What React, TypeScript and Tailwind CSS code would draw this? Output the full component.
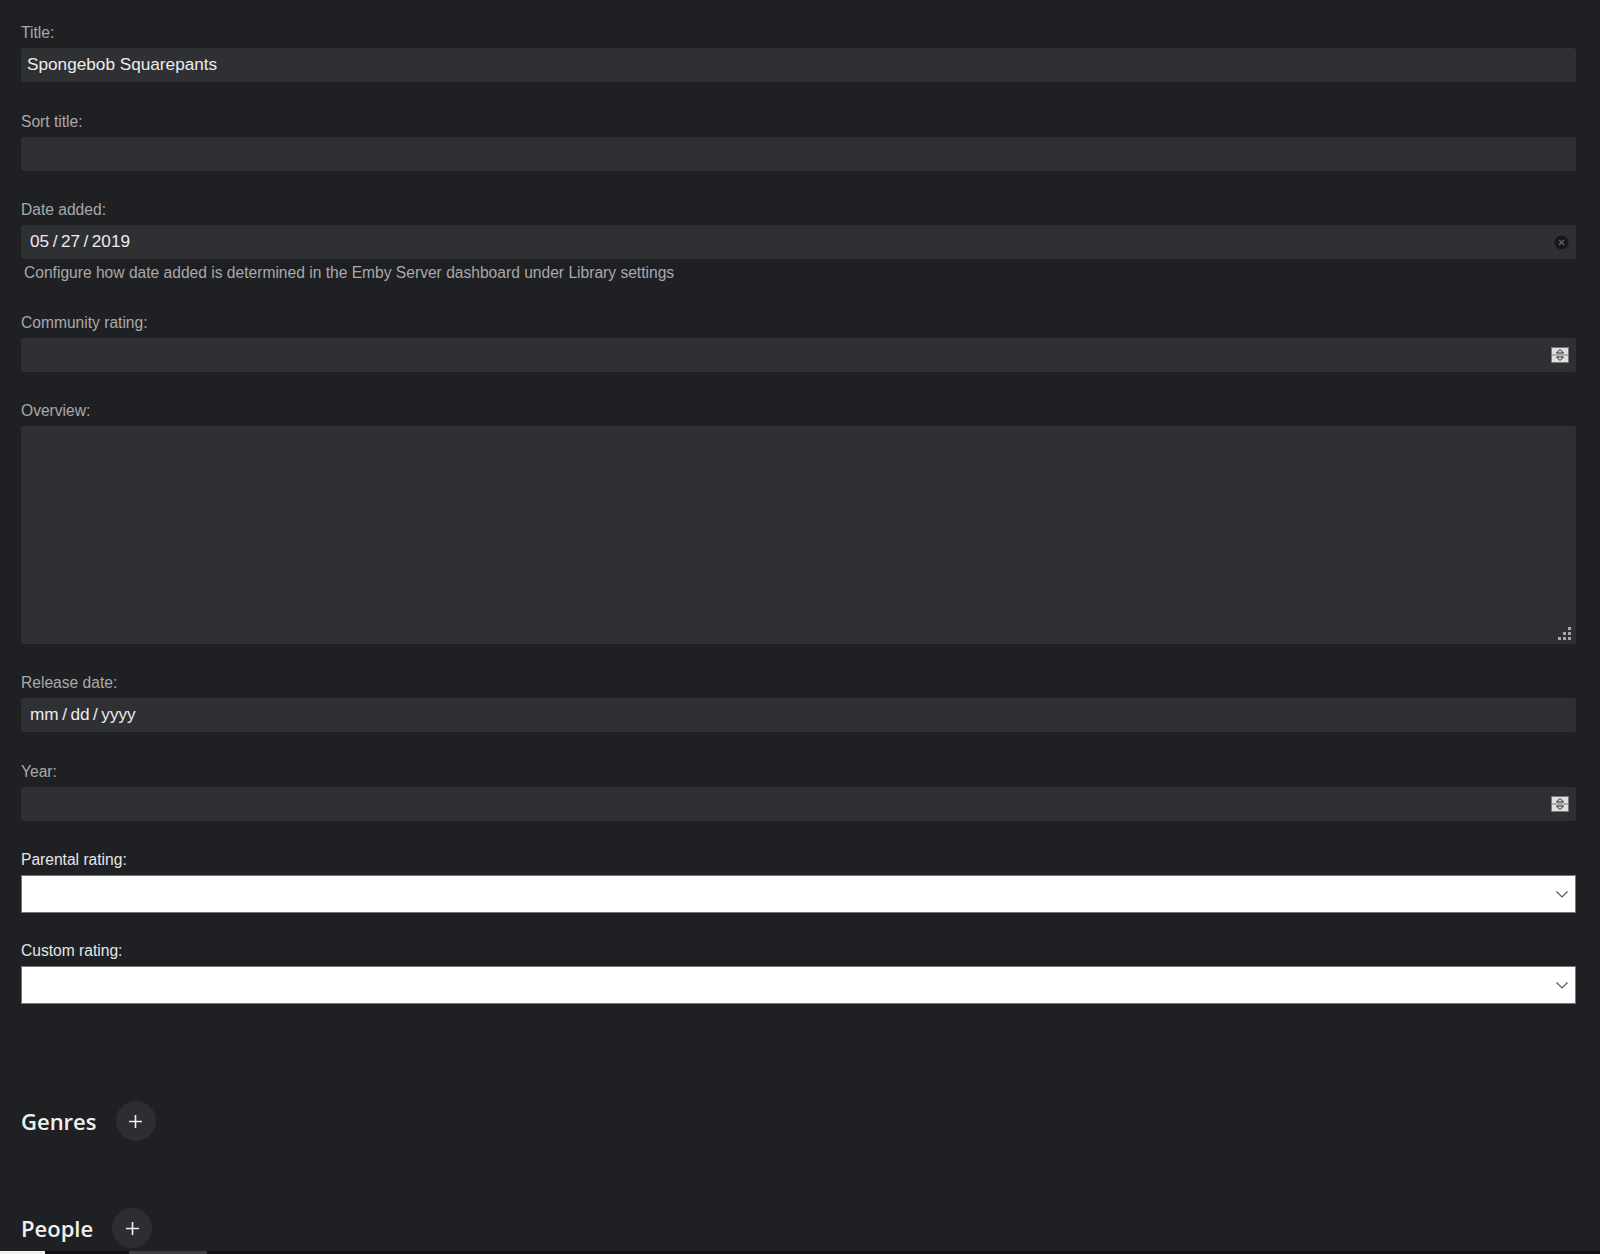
const labelCls = "block h-[18px] text-[15.6px] leading-[18px] text-[#a9a9ab]"

function Label({ children }: { children: string }) {
  return <label className={labelCls}>{children}</label>
}

function TextBox({ value, pad, children }: { value?: React.ReactNode; pad?: string; children?: React.ReactNode }) {
  return (
    <div className={"mt-[6px] flex h-[34px] items-center rounded-[3px] bg-[#2f3034] pr-[6px] text-[17.2px] text-[#ececec] " + (pad ?? "pl-[6px]")}>
      <span className="flex flex-1">{value}</span>
      {children}
    </div>
  )
}

function DateParts({ parts }: { parts: string[] }) {
  return (
    <>
      {parts.map((p, i) => (
        <span key={i} className="flex">
          {i > 0 && <span className="mx-[3.5px]">/</span>}
          <span>{p}</span>
        </span>
      ))}
    </>
  )
}

function Spinner() {
  return (
    <svg width="18" height="16" viewBox="0 0 18 16" className="mr-[1px]">
      <rect x="0.5" y="0.5" width="17" height="15" fill="#e0e0e0" stroke="#7a7a7a" />
      <line x1="1" y1="8" x2="17" y2="8" stroke="#7a7a7a" />
      <path d="M9 2.5 L12.5 6 H5.5 Z" fill="none" stroke="#222" strokeWidth="1" />
      <path d="M9 13.5 L12.5 10 H5.5 Z" fill="none" stroke="#222" strokeWidth="1" />
    </svg>
  )
}

function ClearIcon() {
  return (
    <svg width="15" height="15" viewBox="0 0 15 15" className="mr-[1px]">
      <circle cx="7.5" cy="7.5" r="7" fill="#16171a" />
      <path d="M5 5 L10 10 M10 5 L5 10" stroke="#5c5d61" strokeWidth="1.7" />
    </svg>
  )
}

function Select() {
  return (
    <div className="mt-[6px] flex h-[38px] items-center justify-end border border-[#767676] bg-white pr-[7px]">
      <svg width="12" height="7" viewBox="0 0 12 7">
        <path d="M0.5 0.5 L6 6 L11.5 0.5" fill="none" stroke="#555" strokeWidth="1.1" />
      </svg>
    </div>
  )
}

function Section({ title, className }: { title: string; className: string }) {
  return (
    <div className={"flex items-center " + className}>
      <h2 className="font-['Open_Sans',sans-serif] text-[22px] font-semibold leading-[30px] text-[#f0f0f0]">{title}</h2>
      <button className="ml-[19px] flex h-[40px] w-[40px] items-center justify-center rounded-full bg-[#2d2e32]">
        <svg width="15" height="15" viewBox="0 0 15 15">
          <path d="M7.5 1 V14 M1 7.5 H14" stroke="#f2f2f2" strokeWidth="1.6" />
        </svg>
      </button>
    </div>
  )
}

export default function App() {
  return (
    <div className="flex h-[1254px] flex-col overflow-hidden bg-[#1f2023] font-['Liberation_Sans',Arial,sans-serif]">
      <div className="flex-1 pl-[21px] pr-[24px] pt-[24px]">
        <div className="mb-[31px]">
          <Label>Title:</Label>
          <TextBox value="Spongebob Squarepants" />
        </div>

        <div className="mb-[30px]">
          <Label>Sort title:</Label>
          <TextBox />
        </div>

        <div className="mb-[32px]">
          <Label>Date added:</Label>
          <TextBox value={<DateParts parts={["05", "27", "2019"]} />} pad="pl-[9px]">
            <ClearIcon />
          </TextBox>
          <p className="mt-[5px] pl-[3px] text-[15.6px] leading-[18px] text-[#a9a9ab]">
            Configure how date added is determined in the Emby Server dashboard under Library settings
          </p>
        </div>

        <div className="mb-[30px]">
          <Label>Community rating:</Label>
          <TextBox>
            <Spinner />
          </TextBox>
        </div>

        <div className="mb-[30px]">
          <Label>Overview:</Label>
          <div className="relative mt-[6px] h-[218px] rounded-[3px] bg-[#2f3034]">
            <svg width="13" height="13" viewBox="0 0 13 13" className="absolute bottom-[4px] right-[5px]">
              <g fill="#a8a8a8">
                <rect x="10" y="0" width="3" height="3" />
                <rect x="5" y="5" width="3" height="3" />
                <rect x="10" y="5" width="3" height="3" />
                <rect x="0" y="10" width="3" height="3" />
                <rect x="5" y="10" width="3" height="3" />
                <rect x="10" y="10" width="3" height="3" />
              </g>
            </svg>
          </div>
        </div>

        <div className="mb-[31px]">
          <Label>Release date:</Label>
          <TextBox value={<DateParts parts={["mm", "dd", "yyyy"]} />} pad="pl-[9px]" />
        </div>

        <div className="mb-[30px]">
          <Label>Year:</Label>
          <TextBox>
            <Spinner />
          </TextBox>
        </div>

        <div className="mb-[29px]">
          <label className="block h-[18px] text-[15.6px] leading-[18px] text-[#e6e6e6]">Parental rating:</label>
          <Select />
        </div>

        <div>
          <label className="block h-[18px] text-[15.6px] leading-[18px] text-[#e6e6e6]">Custom rating:</label>
          <Select />
        </div>

        <Section title="Genres" className="mt-[97px]" />
        <Section title="People" className="mt-[67px]" />
      </div>
      <div className="flex h-[3px] bg-[#111214]">
        <div className="w-[45px] bg-[#f2f2f2]" />
        <div className="ml-[84px] w-[78px] bg-[#3c3d41]" />
      </div>
    </div>
  )
}
